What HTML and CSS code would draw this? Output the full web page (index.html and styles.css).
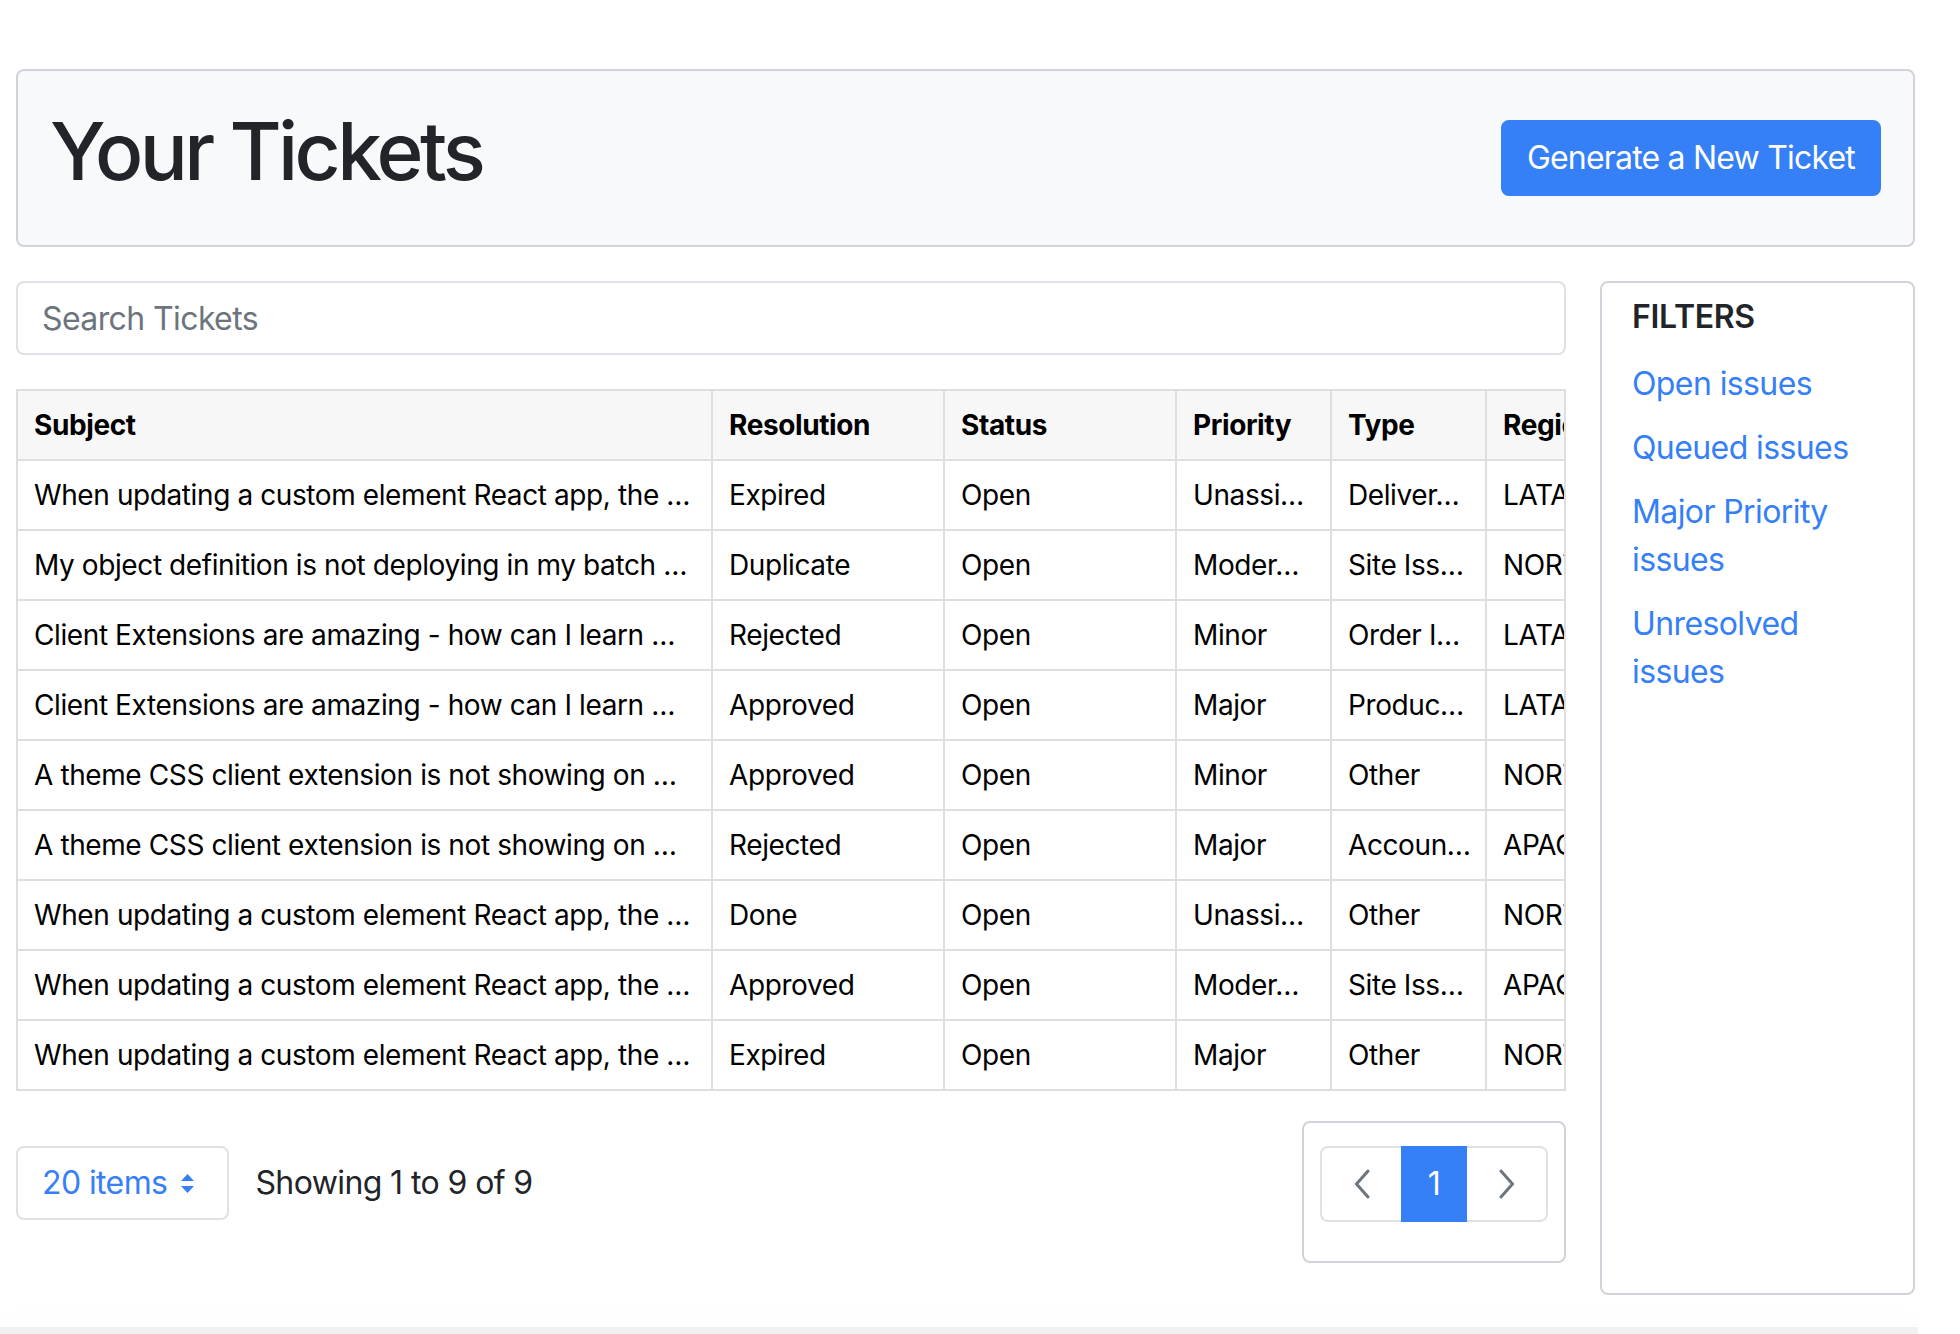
FILE: index.html
```html
<!DOCTYPE html>
<html lang="en">
<head>
<meta charset="utf-8">
<title>Your Tickets</title>
<link rel="stylesheet" href="styles.css">
</head>
<body>
<div class="page">
  <header class="hero">
    <h1 class="hero-title">Your Tickets</h1>
    <button class="btn-new" type="button">Generate a New Ticket</button>
  </header>

  <div class="layout">
    <main class="main">
      <input class="search" type="text" placeholder="Search Tickets">

      <div class="table-wrap">
        <table class="tickets">
          <thead>
            <tr>
              <th class="c-subject">Subject</th>
              <th class="c-wide">Resolution</th>
              <th class="c-wide">Status</th>
              <th class="c-narrow">Priority</th>
              <th class="c-narrow">Type</th>
              <th class="c-wide">Region</th>
            </tr>
          </thead>
          <tbody>
            <tr><td>When updating a custom element React app, the …</td><td>Expired</td><td>Open</td><td>Unassi…</td><td>Deliver…</td><td>LATAM</td></tr>
            <tr><td>My object definition is not deploying in my batch …</td><td>Duplicate</td><td>Open</td><td>Moder…</td><td>Site Iss…</td><td>NORTH…</td></tr>
            <tr><td>Client Extensions are amazing - how can I learn …</td><td>Rejected</td><td>Open</td><td>Minor</td><td>Order I…</td><td>LATAM</td></tr>
            <tr><td>Client Extensions are amazing - how can I learn …</td><td>Approved</td><td>Open</td><td>Major</td><td>Produc…</td><td>LATAM</td></tr>
            <tr><td>A theme CSS client extension is not showing on …</td><td>Approved</td><td>Open</td><td>Minor</td><td>Other</td><td>NORTH…</td></tr>
            <tr><td>A theme CSS client extension is not showing on …</td><td>Rejected</td><td>Open</td><td>Major</td><td>Accoun…</td><td>APAC</td></tr>
            <tr><td>When updating a custom element React app, the …</td><td>Done</td><td>Open</td><td>Unassi…</td><td>Other</td><td>NORTH…</td></tr>
            <tr><td>When updating a custom element React app, the …</td><td>Approved</td><td>Open</td><td>Moder…</td><td>Site Iss…</td><td>APAC</td></tr>
            <tr><td>When updating a custom element React app, the …</td><td>Expired</td><td>Open</td><td>Major</td><td>Other</td><td>NORTH…</td></tr>
          </tbody>
        </table>
      </div>

      <div class="foot">
        <div class="foot-left">
          <div class="page-size">
            <span>20 items</span>
            <svg class="updown" width="13" height="19" viewBox="0 0 13 19" aria-hidden="true">
              <path d="M6.5 0 L13 7 L0 7 Z" fill="#3580f6"/>
              <path d="M0 12 L13 12 L6.5 19 Z" fill="#3580f6"/>
            </svg>
          </div>
          <span class="showing">Showing 1 to 9 of 9</span>
        </div>
        <div class="pag-box">
          <nav class="pagination">
            <a class="pg pg-prev" href="#">
              <svg width="18" height="30" viewBox="0 0 18 30" aria-hidden="true"><path d="M15 2 L3.5 15 L15 28" fill="none" stroke="#6c757d" stroke-width="3" stroke-linecap="round" stroke-linejoin="round"/></svg>
            </a>
            <a class="pg pg-active" href="#">1</a>
            <a class="pg pg-next" href="#">
              <svg width="18" height="30" viewBox="0 0 18 30" aria-hidden="true"><path d="M3 2 L14.5 15 L3 28" fill="none" stroke="#6c757d" stroke-width="3" stroke-linecap="round" stroke-linejoin="round"/></svg>
            </a>
          </nav>
        </div>
      </div>
    </main>

    <aside class="filters">
      <h5 class="filters-title">FILTERS</h5>
      <ul class="filter-list">
        <li><a href="#">Open issues</a></li>
        <li><a href="#">Queued issues</a></li>
        <li><a href="#">Major Priority issues</a></li>
        <li><a href="#">Unresolved issues</a></li>
      </ul>
    </aside>
  </div>
</div>
<div class="bottom-shade"></div>
</body>
</html>
```

FILE: styles.css
```css
* { box-sizing: border-box; }

html, body {
  margin: 0;
  background: #fff;
}

body {
  font-family: Inter, "Noto Sans", "Liberation Sans", sans-serif;
  font-size: 32px;
  line-height: 1.5;
  letter-spacing: -0.6px;
  color: #212529;
}

.page {
  padding: 69px 45px 0 16px;
}

.hero {
  display: flex;
  align-items: center;
  justify-content: space-between;
  height: 178px;
  padding: 0 32px;
  background: #f8f9fa;
  border: 2px solid #d2d2da;
  border-radius: 8px;
}

.hero-title {
  margin: 0 0 14px;
  font-size: 80px;
  line-height: 96px;
  font-weight: 500;
  letter-spacing: -3.6px;
  color: #212529;
}

.btn-new {
  font-family: inherit;
  font-size: 32px;
  line-height: 48px;
  letter-spacing: -0.8px;
  padding: 12px 24px;
  color: #fff;
  background: #3580f6;
  border: 2px solid #3580f6;
  border-radius: 8px;
}

.layout {
  display: flex;
  align-items: stretch;
  gap: 34px;
  margin-top: 34px;
}

.main {
  width: 1550px;
  flex: none;
  padding-bottom: 32px;
}

.search {
  display: block;
  width: 100%;
  height: 74px;
  padding: 0 24px;
  font-family: inherit;
  font-size: 32px;
  letter-spacing: -0.6px;
  color: #212529;
  background: #fff;
  border: 2px solid #dee2e6;
  border-radius: 8px;
  outline: none;
}

.search::placeholder { color: #6c757d; }

.table-wrap {
  margin-top: 34px;
  overflow: hidden;
  border-right: 2px solid #dedede;
}

.tickets {
  table-layout: fixed;
  border-collapse: separate;
  border-spacing: 0;
  width: 1703px;
  font-size: 28px;
  line-height: 42px;
  letter-spacing: -0.4px;
  color: #000;
  border-top: 2px solid #dedede;
  border-left: 2px solid #dedede;
}

.tickets th,
.tickets td {
  text-align: left;
  padding: 13px 16px;
  border-right: 2px solid #dedede;
  border-bottom: 2px solid #dedede;
  white-space: nowrap;
  overflow: hidden;
}

.tickets th {
  font-weight: 700;
  background: #f7f7f7;
}

.c-subject { width: 695px; }
.c-wide { width: 232px; }
.c-narrow { width: 155px; }

.foot {
  display: flex;
  justify-content: space-between;
  align-items: flex-start;
  margin-top: 30px;
}

.foot-left {
  display: flex;
  align-items: center;
  gap: 26px;
  margin-top: 25px;
}

.page-size {
  display: flex;
  align-items: center;
  gap: 14px;
  height: 74px;
  padding: 0 33px 0 24px;
  color: #3580f6;
  border: 2px solid #dee2e6;
  border-radius: 8px;
}

.updown { display: block; }

.showing { color: #212529; }

.pag-box {
  border: 2px solid #d2d2da;
  border-radius: 8px;
  padding: 23px 16px 39px;
}

.pagination {
  display: flex;
  height: 76px;
}

.pg {
  display: flex;
  align-items: center;
  justify-content: center;
  text-decoration: none;
  color: #6c757d;
  border-top: 2px solid #dee2e6;
  border-bottom: 2px solid #dee2e6;
}

.pg svg { display: block; }

.pg-prev {
  width: 81px;
  border-left: 2px solid #dee2e6;
  border-radius: 8px 0 0 8px;
}

.pg-next {
  width: 81px;
  border-right: 2px solid #dee2e6;
  border-radius: 0 8px 8px 0;
}

.pg-active {
  width: 66px;
  color: #fff;
  background: #3580f6;
  border-color: #3580f6;
}

.filters {
  width: 315px;
  flex: none;
  padding: 15px 30px;
  border: 2px solid #d2d2da;
  border-radius: 8px;
}

.filters-title {
  margin: 0 0 24px;
  font-size: 32px;
  line-height: 38px;
  font-weight: 600;
  letter-spacing: -0.3px;
  color: #212529;
}

.filter-list {
  list-style: none;
  margin: 0;
  padding: 0;
  display: flex;
  flex-direction: column;
  gap: 16px;
}

.filter-list a {
  color: #3580f6;
  text-decoration: none;
}

.bottom-shade {
  position: fixed;
  left: 0;
  bottom: 0;
  width: 1918px;
  height: 7px;
  background: #f1f1f1;
  box-shadow: 0 -10px 18px rgba(0, 0, 0, 0.025);
}
```
